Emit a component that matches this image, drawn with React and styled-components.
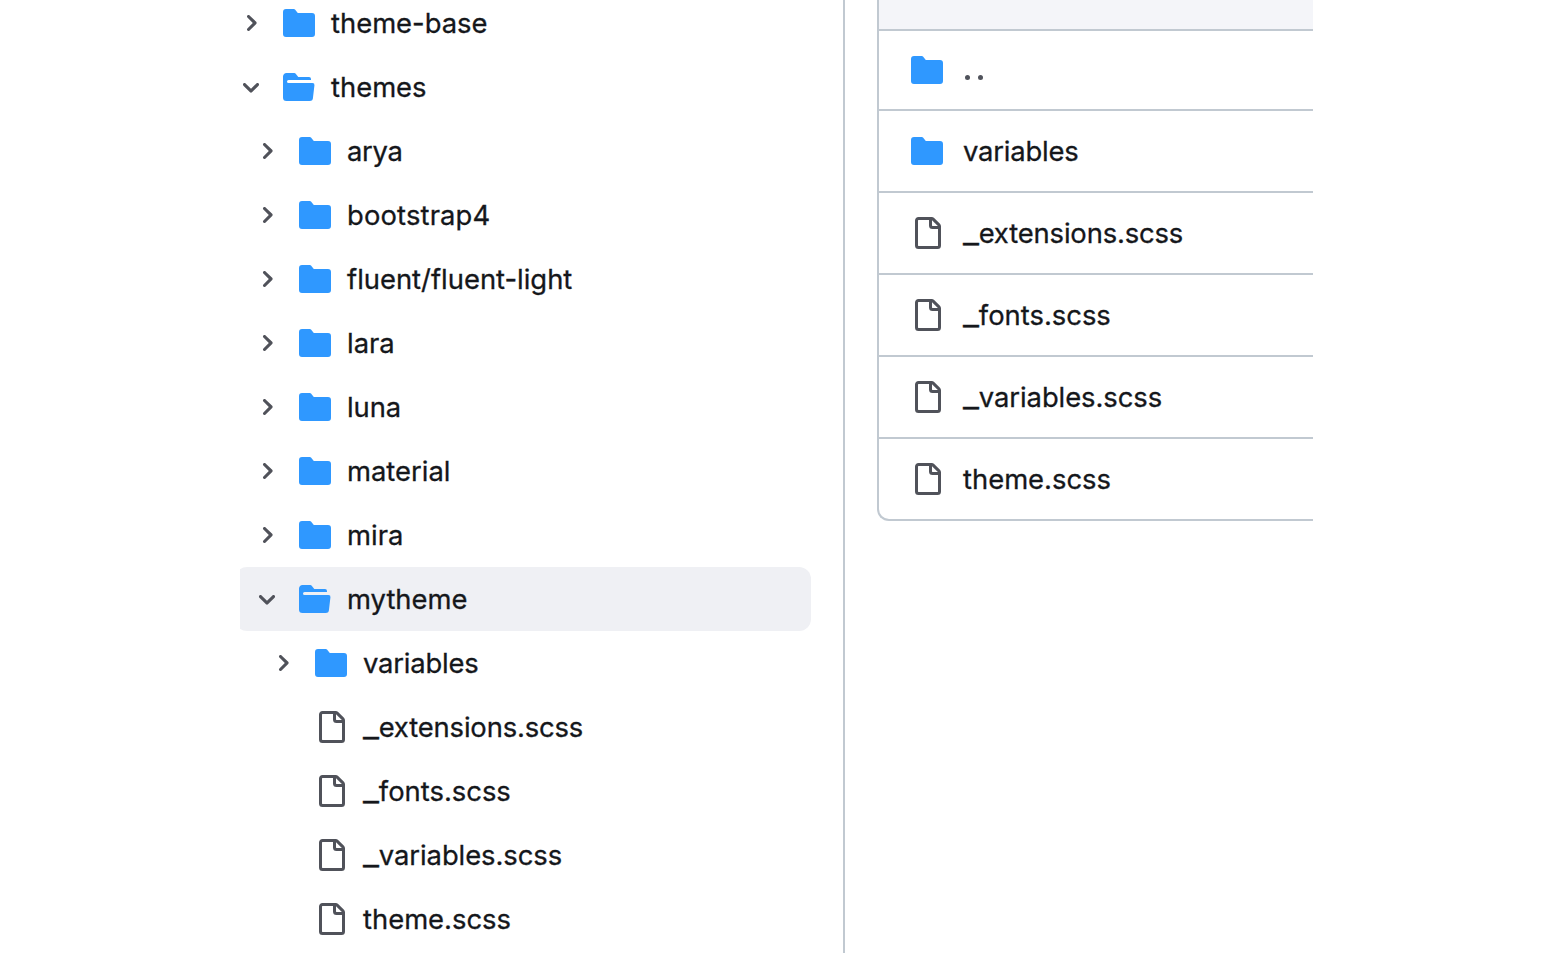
import React from 'react';
import styled, { createGlobalStyle } from 'styled-components';

const GlobalStyle = createGlobalStyle`
  * { box-sizing: border-box; }
  html, body { margin: 0; padding: 0; background: #fff; }
  body { overflow: hidden; font-family: Inter, "Liberation Sans", sans-serif; color: #15171b; }
`;

const Page = styled.main`
  display: flex;
  width: 1313px;
  height: 953px;
  padding-left: 240px;
  overflow: hidden;
`;

const Sidebar = styled.nav`
  width: 605px;
  flex: none;
  border-right: 2px solid #c1c9d1;
  overflow: hidden;
`;

const Tree = styled.ul`
  list-style: none;
  margin: -9px 0 0 -5px;
  padding: 0;
`;

const TreeRow = styled.li`
  display: flex;
  align-items: center;
  width: 576px;
  height: 64px;
  padding-left: ${(p) => 4 + p.$level * 16}px;
  border-radius: 12px;
  background: ${(p) => (p.$active ? '#eff0f4' : 'transparent')};
`;

const Toggle = styled.span`
  display: flex;
  width: 24px;
  margin-right: 20px;
  flex: none;
`;

const Glyph = styled.svg`
  display: block;
  flex: none;
  width: ${(p) => p.$size}px;
  height: ${(p) => p.$size}px;
  fill: ${(p) => p.$color};
`;

const Label = styled.span`
  margin-left: ${(p) => p.$gap || 16}px;
  font-size: 27.4px;
  line-height: 40px;
  letter-spacing: ${(p) => p.$track || 0}px;
  white-space: nowrap;
  -webkit-text-stroke: 0.3px currentColor;
`;

const Underscore = styled.span`
  display: inline-block;
  margin-right: 3.3px;
  transform: scaleX(1.28);
  transform-origin: left;
`;

const Content = styled.section`
  flex: 1;
  padding-left: 32px;
  min-width: 0;
`;

const FileTable = styled.div`
  height: 521px;
  border-left: 2px solid #c1c9d1;
  border-bottom: 2px solid #c1c9d1;
  border-bottom-left-radius: 12px;
`;

const TableHead = styled.div`
  height: 29px;
  background: #f4f5f9;
`;

const FileRow = styled.div`
  display: flex;
  align-items: center;
  height: ${(p) => (p.$short ? 80 : 82)}px;
  padding-left: 32px;
  border-top: 2px solid #c1c9d1;
`;

const ParentLink = styled.span`
  display: flex;
  gap: 8px;
  margin: 15px 0 0 22px;
`;

const Dot = styled.i`
  width: 5px;
  height: 5px;
  border-radius: 50%;
  background: #50535b;
`;

const BLUE = '#2f98ff';
const GRAY = '#50525a';

const paths = {
  folder:
    'M1.5 1A1.5 1.5 0 0 0 0 2.5v11A1.5 1.5 0 0 0 1.5 15h13a1.5 1.5 0 0 0 1.5-1.5v-9A1.5 1.5 0 0 0 14.5 3H7.5a.25.25 0 0 1-.2-.1l-.9-1.2C6.07 1.26 5.55 1 5 1H1.5Z',
  open:
    'M.513 1.513A1.75 1.75 0 0 1 1.75 1h3.5c.55 0 1.07.26 1.4.7l.9 1.2a.25.25 0 0 0 .2.1H13a1 1 0 0 1 1 1v.5H2.75a.75.75 0 0 0 0 1.5h11.978a1 1 0 0 1 .994 1.117L15 13.25A1.75 1.75 0 0 1 13.25 15H1.75A1.75 1.75 0 0 1 0 13.25V2.75c0-.464.184-.91.513-1.237Z',
  file:
    'M2 1.75C2 .784 2.784 0 3.75 0h6.586c.464 0 .909.184 1.237.513l2.914 2.914c.329.328.513.773.513 1.237v9.586A1.75 1.75 0 0 1 13.25 16h-9.5A1.75 1.75 0 0 1 2 14.25Zm1.75-.25a.25.25 0 0 0-.25.25v12.5c0 .138.112.25.25.25h9.5a.25.25 0 0 0 .25-.25V6h-2.75A1.75 1.75 0 0 1 9 4.25V1.5Zm6.75.062V4.25c0 .138.112.25.25.25h2.688l-.011-.013-2.914-2.914-.013-.011Z',
  right:
    'M4.7 10c-.2 0-.4-.1-.5-.2-.3-.3-.3-.8 0-1.1L6.9 6 4.2 3.3c-.3-.3-.3-.8 0-1.1.3-.3.8-.3 1.1 0l3.3 3.2c.3.3.3.8 0 1.1L5.3 9.7c-.2.2-.4.3-.6.3Z',
  down:
    'M6 8.825c-.2 0-.4-.1-.5-.2l-3.3-3.3c-.3-.3-.3-.8 0-1.1.3-.3.8-.3 1.1 0l2.7 2.7 2.7-2.7c.3-.3.8-.3 1.1 0 .3.3.3.8 0 1.1l-3.2 3.2c-.2.2-.4.3-.6.3Z',
};

const ItemIcon = ({ kind }) => (
  <Glyph viewBox="0 0 16 16" $size={32} $color={kind === 'file' ? GRAY : BLUE}>
    <path d={paths[kind]} />
  </Glyph>
);

const Chevron = ({ kind }) => (
  <Glyph viewBox="0 0 12 12" $size={24} $color={GRAY}>
    <path d={paths[kind === 'open' ? 'down' : 'right']} />
  </Glyph>
);

const tree = [
  { name: 'theme-base', kind: 'folder', level: 0 },
  { name: 'themes', kind: 'open', level: 0 },
  { name: 'arya', kind: 'folder', level: 1 },
  { name: 'bootstrap4', kind: 'folder', level: 1 },
  { name: 'fluent/fluent-light', kind: 'folder', level: 1 },
  { name: 'lara', kind: 'folder', level: 1 },
  { name: 'luna', kind: 'folder', level: 1 },
  { name: 'material', kind: 'folder', level: 1 },
  { name: 'mira', kind: 'folder', level: 1 },
  { name: 'mytheme', kind: 'open', level: 1, active: true },
  { name: 'variables', kind: 'folder', level: 2 },
  { name: '_extensions.scss', kind: 'file', level: 2 },
  { name: '_fonts.scss', kind: 'file', level: 2 },
  { name: '_variables.scss', kind: 'file', level: 2 },
  { name: 'theme.scss', kind: 'file', level: 2 },
];

const files = [
  { name: 'variables', kind: 'folder' },
  { name: '_extensions.scss', kind: 'file' },
  { name: '_fonts.scss', kind: 'file' },
  { name: '_variables.scss', kind: 'file' },
  { name: 'theme.scss', kind: 'file' },
];

const tracking = {
  arya: -0.3,
  bootstrap4: 0.15,
  luna: -0.1,
  variables: -0.2,
  '_extensions.scss': -0.15,
  '_variables.scss': -0.05,
};

const Name = ({ text, gap }) => (
  <Label $gap={gap} $track={tracking[text]}>
    {text[0] === '_' ? (
      <>
        <Underscore>_</Underscore>
        {text.slice(1)}
      </>
    ) : (
      text
    )}
  </Label>
);

export default function App() {
  return (
    <>
      <GlobalStyle />
      <Page>
        <Sidebar>
          <Tree>
            {tree.map((item) => (
              <TreeRow key={item.name} $level={item.level} $active={item.active}>
                <Toggle>{item.kind !== 'file' && <Chevron kind={item.kind} />}</Toggle>
                <ItemIcon kind={item.kind} />
                <Name text={item.name} />
              </TreeRow>
            ))}
          </Tree>
        </Sidebar>
        <Content>
          <FileTable>
            <TableHead />
            <FileRow $short>
              <ItemIcon kind="folder" />
              <ParentLink aria-label="Parent directory">
                <Dot />
                <Dot />
              </ParentLink>
            </FileRow>
            {files.map((item) => (
              <FileRow key={item.name}>
                <ItemIcon kind={item.kind} />
                <Name text={item.name} gap={20} />
              </FileRow>
            ))}
          </FileTable>
        </Content>
      </Page>
    </>
  );
}
